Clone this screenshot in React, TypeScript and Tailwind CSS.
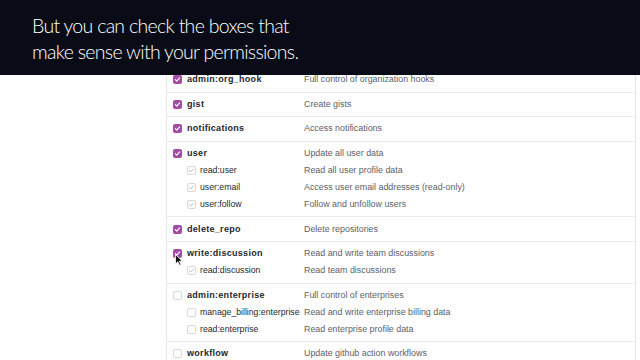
import React from "react";

type Sub = { name: string; desc: string };
type Scope = { name: string; desc: string; on: boolean; subs?: Sub[] };

const scopes: Scope[] = [
  { name: "admin:org_hook", desc: "Full control of organization hooks", on: true },
  { name: "gist", desc: "Create gists", on: true },
  { name: "notifications", desc: "Access notifications", on: true },
  {
    name: "user",
    desc: "Update all user data",
    on: true,
    subs: [
      { name: "read:user", desc: "Read all user profile data" },
      { name: "user:email", desc: "Access user email addresses (read-only)" },
      { name: "user:follow", desc: "Follow and unfollow users" },
    ],
  },
  { name: "delete_repo", desc: "Delete repositories", on: true },
  {
    name: "write:discussion",
    desc: "Read and write team discussions",
    on: true,
    subs: [{ name: "read:discussion", desc: "Read team discussions" }],
  },
  {
    name: "admin:enterprise",
    desc: "Full control of enterprises",
    on: false,
    subs: [
      { name: "manage_billing:enterprise", desc: "Read and write enterprise billing data" },
      { name: "read:enterprise", desc: "Read enterprise profile data" },
    ],
  },
  { name: "workflow", desc: "Update github action workflows", on: false },
];

function Box({ on, sub }: { on: boolean; sub?: boolean }) {
  if (on && !sub) {
    return (
      <span className="flex h-[9px] w-[9px] shrink-0 items-center justify-center rounded-[2px] bg-[#a24ca3]">
        <svg viewBox="0 0 10 10" className="h-[7px] w-[7px]">
          <path d="M2 5.2l2 2L8 2.8" fill="none" stroke="#fff" strokeWidth="1.6" strokeLinecap="round" strokeLinejoin="round" />
        </svg>
      </span>
    );
  }
  return (
    <span className="flex h-[9px] w-[9px] shrink-0 items-center justify-center rounded-[2px] border border-[#d8d8d8] bg-white">
      {on && (
        <svg viewBox="0 0 10 10" className="h-[7px] w-[7px]">
          <path d="M2 5.2l2 2L8 2.8" fill="none" stroke="#b4b4b4" strokeWidth="1.3" strokeLinecap="round" strokeLinejoin="round" />
        </svg>
      )}
    </span>
  );
}

function Line({ name, desc, on, sub }: { name: string; desc: string; on: boolean; sub?: boolean }) {
  return (
    <div className="flex h-[17px] items-center leading-[17px]">
      <div className={`flex w-[137px] shrink-0 items-center ${sub ? "pl-[20px]" : "pl-[6px]"}`}>
        <Box on={on} sub={sub} />
        <span
          className={`${sub ? "ml-[4px] text-[8.7px]" : "ml-[5px] text-[9px] font-bold tracking-[0.3px]"} whitespace-nowrap text-[#24292e]`}
        >
          {name}
        </span>
      </div>
      <span className="whitespace-nowrap text-[8.9px] text-[#5a616b]">{desc}</span>
    </div>
  );
}

export default function App() {
  return (
    <div className="relative h-[360px] w-[640px] overflow-hidden bg-white" style={{ fontFamily: '"Liberation Sans", Arial, sans-serif' }}>
      <div className="ml-[166px] mr-[4px] mt-[68px] border-x border-[#e5e5e5]">
        {scopes.map((s) => (
          <div key={s.name} className="border-b border-[#ececec] py-[3.3px]">
            <Line name={s.name} desc={s.desc} on={s.on} />
            {s.subs?.map((c) => (
              <Line key={c.name} name={c.name} desc={c.desc} on={s.on} sub />
            ))}
          </div>
        ))}
      </div>

      {/* caption banner over the page */}
      <div
        className="absolute left-0 top-0 h-[75px] w-full bg-[#090c16] pl-[32px] pt-[13px] text-[19.5px] font-light leading-[26px] tracking-[-0.7px] text-white"
        style={{ fontFamily: 'Lato, "Noto Sans", sans-serif' }}
      >
        <div>But you can check the boxes that</div>
        <div>make sense with your permissions.</div>
      </div>

      {/* mouse pointer */}
      <svg className="absolute left-[175px] top-[254px]" width="8" height="12" viewBox="0 0 8 12">
        <path d="M0.5 0.5v9.5l2.3-2.2 1.6 3.5 1.5-0.7-1.6-3.4h3.2z" fill="#111" stroke="#fff" strokeWidth="0.8" />
      </svg>
    </div>
  );
}
